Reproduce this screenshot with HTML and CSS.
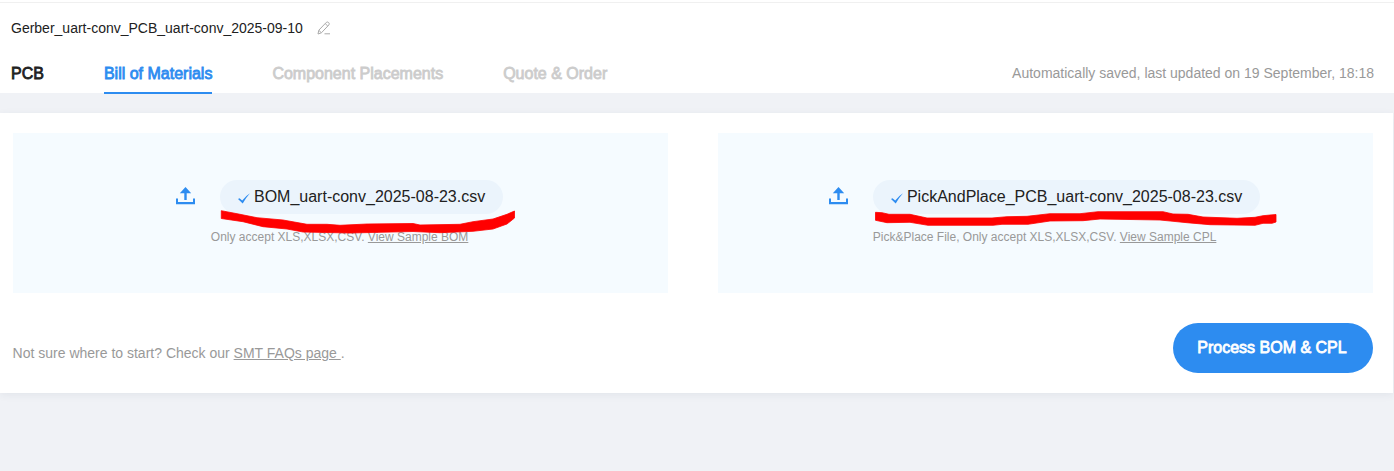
FILE: index.html
```
<!DOCTYPE html>
<html lang="en">
<head>
<meta charset="utf-8">
<title>Bill of Materials</title>
<link rel="stylesheet" href="styles.css">
</head>
<body>
<header class="header">
  <div class="project">
    <span>Gerber_uart-conv_PCB_uart-conv_2025-09-10</span>
    <svg class="edit" width="14" height="14" viewBox="0 0 14 14" fill="none" stroke="#aaa" stroke-width="1"><path d="M1 13 1.8 9.2 9.3 1.4Q10.4.5 11.6 1.5 12.8 2.7 11.9 3.9L4.4 11.8ZM8.2 2.6l2.6 2.5M2 9.5l2.2 2.1M7.5 12.8H13"/></svg>
  </div>
  <nav class="tabs">
    <a class="tab">PCB</a>
    <a class="tab tab-active">Bill of Materials</a>
    <a class="tab tab-disabled">Component Placements</a>
    <a class="tab tab-disabled">Quote &amp; Order</a>
    <span class="saved">Automatically saved, last updated on 19 September, 18:18</span>
  </nav>
</header>
<main class="card">
  <div class="panels">
    <section class="panel">
      <div class="file-row">
        <svg class="upload" width="19" height="18" viewBox="0 0 19 18" fill="#2d8cf0"><path d="M9.5 0 15.2 6.2H10.7V13H8.3V6.2H3.8ZM0 11.5H2V15H17V11.5H19V17.3H0Z"/></svg>
        <div class="pill">
          <svg class="check" width="12" height="11" viewBox="0 0 12 11" fill="#2d8cf0"><path d="M0 6 1.5 5.2 4.2 7.5Q7.5 3 12 .2 8 4.5 4.7 10.6Z"/></svg>
          <span>BOM_uart-conv_2025-08-23.csv</span>
        </div>
      </div>
      <p class="hint">Only accept XLS,XLSX,CSV. <a class="link">View Sample BOM</a></p>
    </section>
    <section class="panel">
      <div class="file-row">
        <svg class="upload" width="19" height="18" viewBox="0 0 19 18" fill="#2d8cf0"><path d="M9.5 0 15.2 6.2H10.7V13H8.3V6.2H3.8ZM0 11.5H2V15H17V11.5H19V17.3H0Z"/></svg>
        <div class="pill">
          <svg class="check" width="12" height="11" viewBox="0 0 12 11" fill="#2d8cf0"><path d="M0 6 1.5 5.2 4.2 7.5Q7.5 3 12 .2 8 4.5 4.7 10.6Z"/></svg>
          <span>PickAndPlace_PCB_uart-conv_2025-08-23.csv</span>
        </div>
      </div>
      <p class="hint">Pick&amp;Place File, Only accept XLS,XLSX,CSV. <a class="link">View Sample CPL</a></p>
    </section>
  </div>
  <div class="footer">
    <p class="faq">Not sure where to start? Check our <a class="link">SMT FAQs page&nbsp;</a>.</p>
    <button class="process">Process BOM &amp; CPL</button>
  </div>
</main>
<!-- freehand marker strokes under the file names -->
<svg class="marks" width="1394" height="471" viewBox="0 0 1394 471" fill="#f00" stroke="#f00" stroke-width=".8" stroke-linejoin="round">
  <path d="M221.3 210.7 240 214.3 257 217.7 283 220 307 224.3H327L340 225.3 367 224 413 223.5 420 225 460 224.3 473 221.7 493 219 507 214.3 514.5 211V218L507 224 493 229 473 231.3 440 232.7 413 231.5 350 233 303 232 287 229 263 226.7 243 221.7 221.3 218.5Z"/>
  <path d="M875.5 212.3 882 212.7 889 214.3H910L927 218H992L1007 216.7 1027 216.3 1050 213.7H1080L1098 211.7H1163L1173 214 1188 214.3 1203 217 1237 218.3 1255 217.3 1263 215.7 1276 214.5V222L1272 223.3H1263L1255 225.3 1210 224.7 1187 222.7 1173 221.3 1160 220 1100 219 1083 220.7 1050 221 1028 224.3H1002L993 225.3H928L910 222.3 887 222.7 875.5 220.3Z"/>
</svg>
</body>
</html>
```
FILE: styles.css
```
* { box-sizing: border-box; }
body {
  margin: 0;
  height: 471px;
  overflow: hidden;
  background: #f0f2f6;
  color: #212121;
  font-family: "Liberation Sans", Arial, sans-serif;
}
p { margin: 0; }
.header {
  height: 94px;
  padding: 16px 20px 0 11px;
  background: linear-gradient(#fff 2px, #f0f0f0 2px, #f0f0f0 3px, #fff 3px, #fff 93px, #f0f2f6 93px);
}
.project {
  display: flex;
  align-items: center;
  gap: 14px;
  height: 24px;
  font-size: 14px;
}
.tabs {
  display: flex;
  height: 54px;
  gap: 60px;
  line-height: 40px;
  padding-top: 14px;
}
.tab {
  font-size: 16px;
  height: 40px;
  -webkit-text-stroke: 0.8px currentColor;
}
.tab-active {
  color: #2d8cf0;
  border-bottom: 2px solid #2d8cf0;
}
.tab-disabled { color: #ccc; }
.saved {
  margin-left: auto;
  font-size: 14px;
  line-height: 38px;
  color: #999;
}
.card {
  width: 1393px;
  height: 280px;
  margin-top: 19px;
  padding: 20px 20px 20px 12.6px;
  background: #fff;
  box-shadow: 0 2px 8px rgba(40, 60, 90, 0.07);
}
.panels {
  display: grid;
  grid-template-columns: 655px 655px;
  gap: 50px;
}
.panel {
  height: 160px;
  padding: 47px 1px 0 0;
  display: flex;
  flex-direction: column;
  align-items: center;
  background: #f5fbff;
}
.file-row {
  display: flex;
  align-items: center;
  gap: 25px;
}
.upload { margin-top: -3px; }
.pill {
  display: flex;
  align-items: center;
  gap: 4px;
  height: 34px;
  padding: 0 18px;
  border-radius: 17px;
  background: #ebf4fc;
  font-size: 16px;
}
.check { margin-top: 3px; }
.hint {
  margin-top: 15px;
  font-size: 12px;
  line-height: 16px;
  color: #999;
}
.link { text-decoration: underline; }
.footer {
  display: flex;
  justify-content: space-between;
  margin-top: 30px;
}
.faq {
  font-size: 14px;
  line-height: 60px;
  color: #999;
}
.process {
  width: 200px;
  height: 50px;
  padding: 0 2px 0 0;
  border: 0;
  border-radius: 25px;
  background: #2d8cf0;
  color: #fff;
  font: 16px "Liberation Sans", Arial, sans-serif;
  -webkit-text-stroke: 0.8px #fff;
}
.marks {
  position: absolute;
  left: 0;
  top: 0;
  pointer-events: none;
}
```
